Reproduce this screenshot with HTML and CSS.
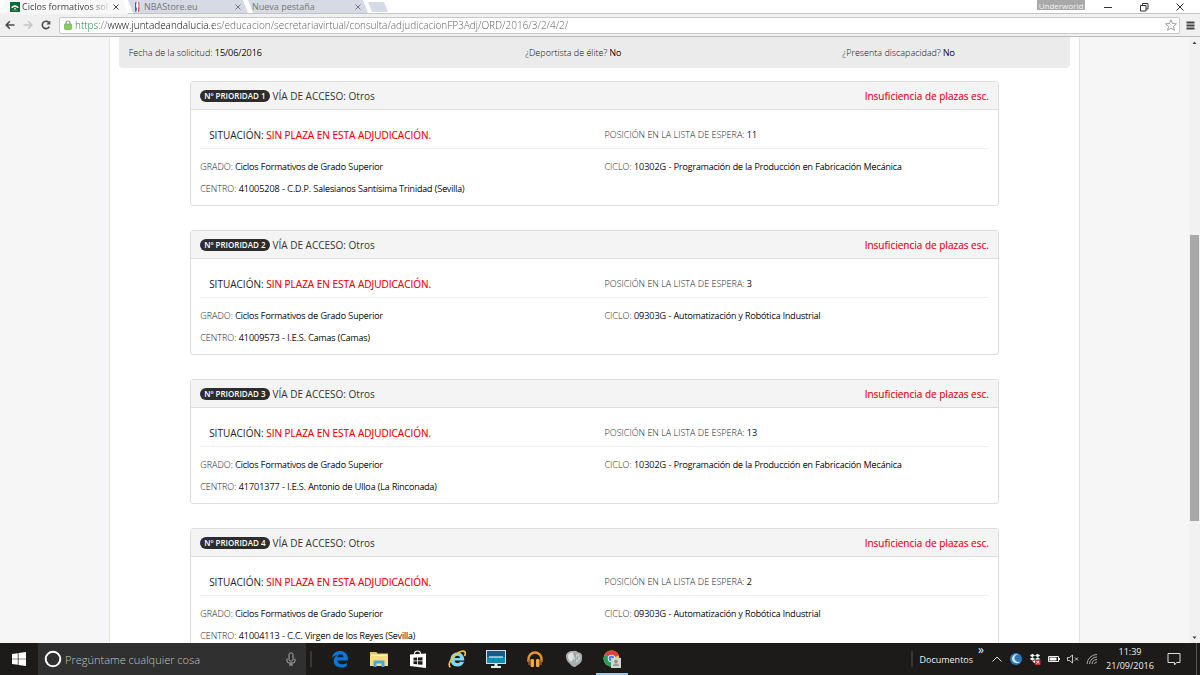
FILE: index.html
```html
<!DOCTYPE html>
<html lang="es">
<head>
    <meta charset="UTF-8">
    <meta name="viewport" content="width=device-width, initial-scale=1.0">
    <title>Ciclos formativos</title>
    <link rel="stylesheet" href="styles.css">
</head>
<body>

<header class="browser">
    <div class="tab-strip">
        <div class="tab tab-active">
            <svg class="favicon" viewBox="0 0 10 10"><rect width="10" height="10" fill="#0b6b33"/><path d="M1 5.5Q5 .8 9 5.5L7.5 6Q5 3.8 2.5 6Z" fill="#fff"/><path d="M4 6.2h2v1H4z" fill="#fff"/><path d="M2.5 8.3h5" stroke="#5fa87c" stroke-width=".8"/></svg>
            <button class="tab-title">Ciclos formativos sol</button>
            <button class="tab-close" aria-label="Cerrar"><svg viewBox="0 0 8 8"><path d="M1.5 1.5l5 5M6.5 1.5l-5 5"/></svg></button>
        </div>
        <div class="tab">
            <svg class="favicon" viewBox="0 0 10 10"><rect x="3" width="4.5" height="10" rx="1" fill="#fff"/><path d="M3 1q0-1 1-1h.6L4 4l1 3-.8 3Q3 10 3 9Z" fill="#3a62ae"/><path d="M6 0q1.5 0 1.5 1v8q0 1-1.5 1L5.8 6.5l.8-2Z" fill="#e04a58"/></svg>
            <button class="tab-title">NBAStore.eu</button>
            <button class="tab-close" aria-label="Cerrar"><svg viewBox="0 0 8 8"><path d="M1.5 1.5l5 5M6.5 1.5l-5 5"/></svg></button>
        </div>
        <div class="tab tab-blank">
            <button class="tab-title">Nueva pestaña</button>
            <button class="tab-close" aria-label="Cerrar"><svg viewBox="0 0 8 8"><path d="M1.5 1.5l5 5M6.5 1.5l-5 5"/></svg></button>
        </div>
        <button class="new-tab" aria-label="Pestaña nueva"></button>
        <div class="window-controls">
            <button class="profile">Underworld</button>
            <button aria-label="Minimizar"><svg viewBox="0 0 10 10"><path d="M1 5.5h8"/></svg></button>
            <button aria-label="Restaurar"><svg viewBox="0 0 10 10"><path d="M1.5 3.5h5.5v5.5H1.5zM3.5 3.5V1.5H9V7H7"/></svg></button>
            <button aria-label="Cerrar"><svg viewBox="0 0 10 10"><path d="M1.5 1.5l7 7M8.5 1.5l-7 7"/></svg></button>
        </div>
    </div>

    <div class="toolbar">
        <button class="tool" aria-label="Atrás"><svg viewBox="0 0 10 10"><path d="M9.5 5H1.2M4.8 1.3L1.2 5l3.6 3.7"/></svg></button>
        <button class="tool tool-off" aria-label="Adelante"><svg viewBox="0 0 10 10"><path d="M.5 5h8.3M5.2 1.3L8.8 5 5.2 8.7"/></svg></button>
        <button class="tool" aria-label="Recargar"><svg viewBox="0 0 10 10"><path d="M8.3 6.6A3.7 3.7 0 1 1 7.7 2.4"/><path d="M9.3.4v4H5.3z" fill="#4a4a4a" stroke="none"/></svg></button>
        <div class="address">
            <svg class="lock" viewBox="0 0 8 10"><path d="M2 4.5V3a2 2 0 0 1 4 0v1.5" fill="none" stroke="#8a9a80" stroke-width="1.2"/><rect x=".5" y="4" width="7" height="5.5" rx=".8" fill="#86cf5c" stroke="#62a43f" stroke-width=".6"/></svg>
            <input class="url" type="text" aria-label="Dirección" value="https://www.juntadeandalucia.es/educacion/secretariavirtual/consulta/adjudicacionFP3Adj/ORD/2016/3/2/4/2/">
            <button class="star" aria-label="Favorito"><svg viewBox="0 0 12 12"><path d="M6 .8l1.5 3.7 4 .3-3 2.6.9 3.9L6 9.2l-3.4 2.1.9-3.9-3-2.6 4-.3z"/></svg></button>
        </div>
        <button class="menu" aria-label="Menú"><svg viewBox="0 0 9 9"><path d="M.5 1.5h8M.5 4.5h8M.5 7.5h8"/></svg></button>
    </div>
</header>

<div class="viewport">
    <main class="page">
        <div class="content">
            <section class="info">
                <p>Fecha de la solicitud: <b>15/06/2016</b></p>
                <p>¿Deportista de élite? <b>No</b></p>
                <p>¿Presenta discapacidad? <b>No</b></p>
            </section>
            <div class="cards" id="cards">
                <!-- Filled from the list below -->
            </div>
        </div>
    </main>
    <div class="scrollbar">
        <svg viewBox="0 0 11 11"><path d="M3.5 7L5.5 4.5 7.5 7z"/></svg>
        <div class="track"><div class="thumb"></div></div>
        <svg viewBox="0 0 11 11"><path d="M3.5 4.5L5.5 7 7.5 4.5z"/></svg>
    </div>
</div>

<footer class="taskbar">
    <button class="start" aria-label="Inicio"><svg viewBox="0 0 14 14"><path d="M0 2l5.8-.8v5.5H0zM6.5 1.1L14 0v6.7H6.5zM0 7.3h5.8v5.5L0 12zM6.5 7.3H14V14l-7.5-1.1z"/></svg></button>
    <label class="cortana">
        <svg class="ring" viewBox="0 0 18 18"><circle cx="9" cy="9" r="7.3"/></svg>
        <input type="text" placeholder="Pregúntame cualquier cosa" aria-label="Buscar">
        <svg class="mic" viewBox="0 0 10 14"><rect x="3" y="1" width="4" height="8" rx="1.5"/><path d="M1 6.5V9q0 2 2 2h4q2 0 2-2V6.5M5 11v2M3 13h4"/></svg>
    </label>
    <span class="divider"></span>
    <nav class="apps">
        <button aria-label="Edge"><svg viewBox="0 0 18 18"><path d="M1 8.2C1.8 3.5 5 1 9.3 1c4.6 0 7.5 3.2 7.5 7.5v2H6.3c.2 2.5 2.2 3.7 4.7 3.7 2 0 3.5-.5 4.8-1.3v3.4c-1.5.8-3.3 1.2-5.5 1.2-4.5 0-7.6-2.5-7.6-6.7 0-2.5 1.5-4.7 3.8-5.8C4.5 5.3 2.3 6.3 1 8.2zM6.4 7.2h6c0-1.8-1-3-2.9-3S6.6 5.5 6.4 7.2z" fill="#0a78d7"/></svg></button>
        <button aria-label="Explorador"><svg viewBox="0 0 18 18"><path d="M0 2h6.5l1 1.5H18V16H0z" fill="#e8c25a"/><path d="M1 4.5h16V9H1z" fill="#fff2bd"/><path d="M0 6h18v10H0z" fill="#f8db80"/><path d="M3.5 17v-6.5h11V17h-3v-3.5h-5V17z" fill="#45a9d8"/></svg></button>
        <button aria-label="Tienda"><svg viewBox="0 0 18 18"><path d="M1 4.5L17 3.5V18L1 16z" fill="#fff"/><path d="M5.5 6V3.5Q5.8 1 8.5 1t3 2.5V6" fill="none" stroke="#fff" stroke-width="1.2"/><path d="M4.5 7.8l3.7-.2v3H4.5zM9 7.5l4.5-.3v3.4H9zM4.5 11.3h3.7v3l-3.7-.3zM9 11.3h4.5v3.5L9 14.4z" fill="#1c1b1a"/></svg></button>
        <button aria-label="Internet Explorer"><svg viewBox="0 0 18 18"><path d="M2.5 8.5C3 5 5.7 2.5 9.3 2.5c4.4 0 7 3 7 8H6.6c.2 1.7 1.3 2.6 2.9 2.6 1.2 0 2-.5 2.5-1.4h4c-.8 3-3.2 4.8-6.7 4.8-4.3 0-7-3-6.8-8zM6.7 8h5.4c-.2-1.5-1.1-2.3-2.6-2.3S7 6.5 6.7 8z" fill="#7fd8f8"/><path d="M2.4 17.2C-.8 15 3 8.5 8.3 4.2 12 1.2 16 .2 17 2c.6 1 .3 2.5-.5 4" fill="none" stroke="#f2c531" stroke-width="1.7"/></svg></button>
        <button aria-label="Lenovo"><svg class="wide" viewBox="0 0 20 18"><path d="M0 0h20v14H0z" fill="#d5dde2"/><path d="M1 1h18v12H1z" fill="#11618d"/><path d="M1 7h18v6H1z" fill="#1588b5"/><path d="M3 7h14" stroke="#d8f2ff" stroke-width="1.2"/><path d="M8.5 14h3v2H15V18H5v-2h3.5z" fill="#e5e9ec"/></svg></button>
        <button aria-label="Auriculares"><svg viewBox="0 0 18 18"><path d="M2.5 12V9a6.5 6.5 0 0 1 13 0v3" fill="none" stroke="#e8962a" stroke-width="2.4"/><rect x="4.5" y="9" width="3.5" height="8" rx="1.2" fill="#f7a934"/><rect x="10" y="9" width="3.5" height="8" rx="1.2" fill="#f7a934"/><path d="M3 10v5M15 10v5" stroke="#8d6130" stroke-width="1.5"/></svg></button>
        <button aria-label="Juego"><svg viewBox="0 0 18 18"><path d="M1 5Q3 .5 8 1q3-.6 5 1.3Q18 3 17 8q.3 4-3.5 6.5L10 17q-3 .3-5-3Q.3 10 1 5z" fill="#a9adb0"/><path d="M3 5q2-3 5-2.5L9 8l-3 4Q2.5 9 3 5z" fill="#dfe2e3"/><path d="M10 5l4-1 1 5-4 4-2-3z" fill="#c9cdcf"/><path d="M10 4l1 4-1 4M13 6l-1 4" fill="none" stroke="#84888c" stroke-width=".7"/></svg></button>
        <button class="app-open" aria-label="Chrome"><svg viewBox="0 0 18 18"><circle cx="8.5" cy="8.5" r="8" fill="#f5c930"/><path d="M8.5 8.5L1.6 4.5A8 8 0 0 1 15.9 5.3z" fill="#db4537"/><path d="M8.5.5A8 8 0 0 1 15.9 5.3H8.5z" fill="#db4537"/><path d="M1.6 4.5A8 8 0 0 0 8 16.5l3-5-2.5-3z" fill="#2b9e5a"/><circle cx="8.5" cy="8.5" r="3.7" fill="#fff"/><circle cx="8.5" cy="8.5" r="2.9" fill="#4285f4"/><path d="M8 8h10v10H8z" fill="#d4d4cf"/><circle cx="13" cy="11.5" r="1.7" fill="#898c8c"/><path d="M10 16q0-2.5 3-2.5t3 2.5z" fill="#999c9b"/></svg></button>
    </nav>
    <div class="tray">
        <span class="divider"></span>
        <button class="docs">Documentos<sup>»</sup></button>
        <button aria-label="Iconos ocultos"><svg viewBox="0 0 12 12"><path d="M1.5 8.5L6 4l4.5 4.5" fill="none" stroke="#ddd"/></svg></button>
        <button aria-label="Luna"><svg viewBox="0 0 12 12"><circle cx="6" cy="6" r="6" fill="#2f78b8"/><path d="M8.5 1.5A4.5 4.5 0 1 0 10.5 8 3.7 3.7 0 1 1 8.5 1.5z" fill="#d5edfb"/></svg></button>
        <button aria-label="Dropbox"><svg viewBox="0 0 12 12"><path d="M3.5.8L6 2.5 3.3 4.2.8 2.5zM8.5.8L6 2.5l2.7 1.7 2.5-1.7zM.8 6l2.5-1.8L6 6 3.5 7.7zM11.2 6L8.7 4.2 6 6l2.5 1.7zM3.5 8.5L6 7l2.5 1.5L6 10.5z" fill="#f4f4f4"/><path d="M6 6.5h5.5V12H6z" fill="#d42f35"/><path d="M7.5 8l2.5 2.5M10 8l-2.5 2.5" stroke="#fff"/></svg></button>
        <button aria-label="Batería"><svg viewBox="0 0 12 12"><path d="M.5 3.5h10v5H.5z" fill="none" stroke="#eee"/><path d="M1.5 4.5h7v3h-7z" fill="#fff"/><path d="M11.5 5v2" stroke="#eee"/></svg></button>
        <button aria-label="Volumen"><svg viewBox="0 0 12 12"><path d="M.5 4.5h2L5.5 2v8L2.5 7.5h-2zM8 4.5l3 3M11 4.5l-3 3" fill="none" stroke="#ddd" stroke-width=".9"/></svg></button>
        <button aria-label="Red"><svg viewBox="0 0 12 12"><path d="M1 11A10 10 0 0 1 11 1.5M3.5 11A7.5 7.5 0 0 1 11 4M6 11a5 5 0 0 1 5-4.5M8.5 11A2.5 2.5 0 0 1 11 9" fill="none" stroke="#b8b8b8" stroke-width=".9"/></svg></button>
        <button class="clock"><time>11:39</time><time>21/09/2016</time></button>
        <button class="notices" aria-label="Notificaciones"><svg viewBox="0 0 14 14"><path d="M1 1.5h12v9H9.5L7.5 13v-2.5H1z" fill="none" stroke="#ddd"/></svg></button>
    </div>
</footer>

<script>
    const requests = [
        { no: 1, wait: 11, cycle: "10302G - Programación de la Producción en Fabricación Mecánica", school: "41005208 - C.D.P. Salesianos Santísima Trinidad (Sevilla)" },
        { no: 2, wait: 3, cycle: "09303G - Automatización y Robótica Industrial", school: "41009573 - I.E.S. Camas (Camas)" },
        { no: 3, wait: 13, cycle: "10302G - Programación de la Producción en Fabricación Mecánica", school: "41701377 - I.E.S. Antonio de Ulloa (La Rinconada)" },
        { no: 4, wait: 2, cycle: "09303G - Automatización y Robótica Industrial", school: "41004113 - C.C. Virgen de los Reyes (Sevilla)" }
    ];

    const cards = document.getElementById("cards");

    requests.forEach(item => {
        const card = `<article class="card">
                        <h2 class="card-header">
                            <span class="badge">Nº PRIORIDAD ${item.no}</span>
                            <span>VÍA DE ACCESO: Otros</span>
                            <span class="reason">Insuficiencia de plazas esc.</span>
                        </h2>
                        <div class="card-body">
                            <div class="row status">
                                <p class="situation">SITUACIÓN: <em>SIN PLAZA EN ESTA ADJUDICACIÓN.</em></p>
                                <p>POSICIÓN EN LA LISTA DE ESPERA: <b>${item.wait}</b></p>
                            </div>
                            <div class="row">
                                <p>GRADO: <b>Ciclos Formativos de Grado Superior</b></p>
                                <p>CICLO: <b>${item.cycle}</b></p>
                            </div>
                            <p>CENTRO: <b>${item.school}</b></p>
                        </div>
                      </article>`;
        cards.insertAdjacentHTML("beforeend", card);
    });
</script>

</body>
</html>
```
FILE: styles.css
```css
* {
    box-sizing: border-box;
}

body {
    display: flex;
    flex-direction: column;
    height: 100vh;
    margin: 0;
    overflow: hidden;
    font-family: "Open Sans", "Noto Sans", sans-serif;
    font-size: 9px;
    color: #333;
}

p, h2 {
    margin: 0;
}

button, input {
    padding: 0;
    border: none;
    background: none;
    font: inherit;
    color: inherit;
}

svg {
    display: block;
    flex: none;
}

/* Browser */
.tab-strip {
    display: flex;
    height: 14px;
    background-color: #fff;
    border-bottom: 1px solid #c4c4c4;
}

.tab {
    display: flex;
    align-items: center;
    width: 120px;
    padding: 0 6px 0 4px;
    background-color: #d5dae4;
    clip-path: polygon(0 0, 115px 0, 100% 100%, 5px 100%);
    color: #777;
}

.tab-active {
    width: 128px;
    height: 14px;
    padding: 0 8px 0 10px;
    background-color: #f8f8f8;
    clip-path: polygon(5px 0, 123px 0, 100% 100%, 0 100%);
    color: #444;
}

.tab-blank {
    padding-left: 4px;
}

.favicon {
    width: 10px;
    height: 10px;
    margin-right: 2px;
}

.tab-title {
    flex: 1;
    min-width: 0;
    overflow: hidden;
    text-align: left;
    white-space: nowrap;
    line-height: 12px;
}

.tab-active .tab-title {
    -webkit-mask-image: linear-gradient(to right, #000 75%, transparent 100%);
    mask-image: linear-gradient(to right, #000 75%, transparent 100%);
}

.tab-close svg {
    width: 8px;
    height: 8px;
    stroke: currentColor;
}

.new-tab {
    width: 20px;
    height: 10px;
    margin-top: 2px;
    background-color: #d5dae4;
    clip-path: polygon(0 0, 80% 0, 100% 100%, 20% 100%);
}

.window-controls {
    display: flex;
    gap: 26px;
    margin-left: auto;
    padding-right: 15px;
}

.window-controls svg {
    width: 10px;
    height: 10px;
    fill: none;
    stroke: #333;
}

.profile {
    height: 10px;
    width: 48px;
    margin-right: -8px;
    background-color: #a9a9a9;
    color: #f2f2f2;
    font-size: 8px;
    line-height: 9px;
}

.toolbar {
    display: flex;
    align-items: center;
    height: 23px;
    padding: 0 5px;
    gap: 8px;
    background-color: #f0f0f0;
    border-bottom: 1px solid #b9b9b9;
}

.tool svg {
    width: 10px;
    height: 10px;
    fill: none;
    stroke: #4a4a4a;
    stroke-width: 1.6;
}

.tool-off svg {
    stroke: #c4c4c4;
}

.address {
    display: flex;
    align-items: center;
    flex: 1;
    height: 17px;
    margin-right: -2px;
    padding: 0 2px 0 4px;
    gap: 3px;
    background-color: #fff;
    border: 1px solid #c8c8c8;
    border-radius: 2px;
}

.lock {
    width: 8px;
    height: 10px;
}

/* Scheme green, host dark, path grey */
.url {
    flex: 1;
    min-width: 0;
    font-size: 10px;
    font-weight: 300;
    line-height: 15px;
    color: transparent;
    background: linear-gradient(to right, #118022 25px, #666 25px 32px, #000 32px 139px, #555 139px);
    -webkit-background-clip: text;
    background-clip: text;
}

.star svg {
    width: 12px;
    height: 12px;
    fill: none;
    stroke: #888;
    stroke-width: .8;
}

.menu svg {
    width: 9px;
    height: 9px;
    stroke: #444;
    stroke-width: 2;
}

/* Page */
.viewport {
    display: flex;
    flex: 1;
    min-height: 0;
}

.page {
    flex: 1;
    overflow: hidden;
    background-color: #f6f6f6;
}

.content {
    width: 81.7%;
    min-height: 100%;
    margin: 0 auto;
    padding: 0 9px;
    background-color: #fff;
    border: 1px solid #dfe8d6;
    border-width: 0 1px;
}

.info {
    display: grid;
    grid-template-columns: 5fr 4fr 3fr;
    padding: 3px 0 2px;
    background-color: #ebebeb;
    border-radius: 0 0 4px 4px;
    font-weight: 300;
    line-height: 26px;
    color: #111;
}

.info p {
    padding: 0 10px;
}

/* Light face, thickened in place so that the widths stay those of the labels */
b {
    font-weight: 300;
    color: #111;
    text-shadow: 0 0 #111;
}

.cards {
    display: flex;
    flex-direction: column;
    gap: 24px;
    padding: 13px 7.5%;
}

.card {
    border: 1px solid #ddd;
    border-radius: 3px;
}

.card-header {
    display: flex;
    align-items: center;
    gap: 3px;
    padding: 1px 9px 0;
    background-color: #f4f4f4;
    border-bottom: 1px solid #ddd;
    font-size: 10px;
    font-weight: 400;
    line-height: 26px;
}

.badge {
    padding: 0 4px;
    background-color: #2d2d2d;
    border-radius: 6px;
    color: #fff;
    font-size: 8px;
    font-weight: 600;
    line-height: 12px;
}

.reason {
    margin-left: auto;
    color: #e30a17;
    text-shadow: 0 0 rgba(227, 10, 23, 0.4);
}

.card-body {
    padding: 15px 9px 5px;
    font-weight: 300;
    line-height: 22px;
    color: #222;
}

.row {
    display: grid;
    grid-template-columns: 1fr 1fr;
}

.row p + p {
    padding-left: 10px;
}

.status {
    margin-bottom: 7px;
    padding-bottom: 3px;
    border-bottom: 1px solid #eee;
    line-height: 20px;
}

.situation {
    padding-left: 9px;
    font-size: 10px;
    font-weight: 400;
}

.situation em {
    font-style: normal;
    color: #f00000;
    text-shadow: 0 0 rgba(240, 0, 0, 0.3);
}

.scrollbar {
    display: flex;
    flex-direction: column;
    width: 11px;
    background-color: #f1f1f1;
}

.scrollbar svg {
    width: 11px;
    height: 11px;
    fill: #444;
}

.track {
    display: grid;
    flex: 1;
    grid-template-rows: 32% 49% 1fr;
    padding: 0 1px;
}

.thumb {
    grid-row: 2;
    background-color: #a8a8a8;
}

/* Taskbar */
.taskbar {
    display: flex;
    height: 32px;
    background-color: #1c1b1a;
    color: #eee;
}

.taskbar button {
    display: flex;
    align-items: center;
    justify-content: center;
}

.start {
    width: 38px;
}

.start svg {
    width: 14px;
    height: 14px;
    fill: #fff;
}

.cortana {
    display: flex;
    align-items: center;
    width: 268px;
    padding: 0 10px 0 6px;
    gap: 3px;
    background-color: #303030;
}

.cortana input {
    flex: 1;
    min-width: 0;
    font-size: 11px;
    font-weight: 300;
}

.cortana input::placeholder {
    color: #c4c4c4;
}

.ring {
    width: 18px;
    height: 18px;
    fill: none;
    stroke: #fff;
    stroke-width: 2;
}

.mic {
    width: 10px;
    height: 14px;
    fill: none;
    stroke: #aaa;
}

.divider {
    width: 2px;
    height: 16px;
    margin: 8px 4px;
    background-color: #383736;
}

.apps {
    display: flex;
    margin-left: 4px;
}

.apps button {
    width: 39px;
}

.apps svg {
    width: 18px;
    height: 18px;
}

.apps .wide {
    width: 20px;
}

.apps .app-open {
    width: 32px;
    margin-left: 3px;
    border-bottom: 2px solid #9cc8ea;
    border-top: 2px solid transparent;
}

.tray {
    display: flex;
    margin-left: auto;
    padding-right: 3px;
}

.tray button {
    width: 19px;
}

.tray svg {
    width: 12px;
    height: 12px;
}

.tray .docs {
    width: auto;
    margin: 0 3px 0 2px;
    gap: 5px;
}

.docs sup {
    align-self: flex-start;
    font-size: 12px;
    line-height: 14px;
}

.tray .clock {
    flex-direction: column;
    width: 58px;
    line-height: 14px;
}

.tray .notices {
    width: 38px;
    padding: 0 15px 0 8px;
    border-right: 1px solid #555;
}

.tray .notices svg {
    width: 14px;
    height: 14px;
}
```
